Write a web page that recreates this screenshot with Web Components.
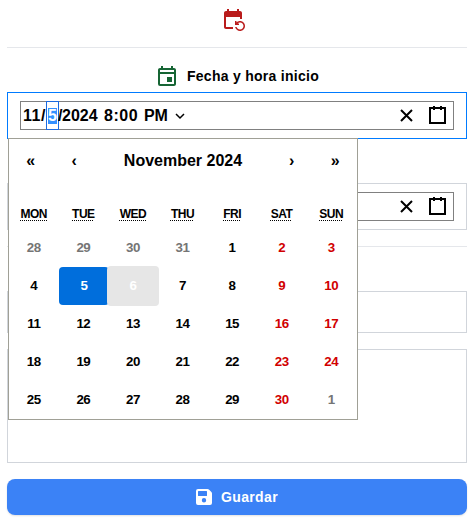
<!DOCTYPE html>
<html lang="es">
<head>
<meta charset="utf-8">
<title>Fecha y hora</title>
<style>
body { margin: 0; background: #fff; color: #000; font-family: "Liberation Sans", Arial, sans-serif; }
</style>
</head>
<body>
<event-form></event-form>
<script>
class UiIcon extends HTMLElement {
  connectedCallback() {
    const shapes = {
      repeat: ['0 0 24 24', '<path fill="currentColor" d="M21 12V6c0-1.1-.9-2-2-2h-1V2h-2v2H8V2H6v2H5c-1.1 0-1.99.9-1.99 2L3 20c0 1.1.89 2 2 2h7v-2H5V10h14v2h2zm-5.36 8c.43 1.45 1.77 2.5 3.36 2.5 1.93 0 3.5-1.57 3.5-3.5s-1.57-3.5-3.5-3.5c-.95 0-1.82.38-2.45 1H18V18h-4v-4h1.5v1.43c.9-.88 2.14-1.43 3.5-1.43 2.76 0 5 2.24 5 5s-2.24 5-5 5c-2.42 0-4.44-1.72-4.9-4h1.54z"/>'],
      event: ['0 0 24 24', '<path fill="currentColor" d="M19 4h-1V2h-2v2H8V2H6v2H5c-1.11 0-1.99.9-1.99 2L3 20a2 2 0 0 0 2 2h14c1.1 0 2-.9 2-2V6c0-1.1-.9-2-2-2zm0 16H5V10h14v10zm0-12H5V6h14v2zM12 13h5v5h-5z"/>'],
      save: ['0 0 16 16', '<path fill="currentColor" fill-rule="evenodd" d="M2 0h9.5a2 2 0 0 1 1.4.6l2.5 2.5a2 2 0 0 1 .6 1.4V14a2 2 0 0 1-2 2H2a2 2 0 0 1-2-2V2a2 2 0 0 1 2-2zM2.6 2a.6.6 0 0 0-.6.6v3.8a.6.6 0 0 0 .6.6h7.8a.6.6 0 0 0 .6-.6V2.6a.6.6 0 0 0-.6-.6zM8 9a2.2 2.2 0 1 0 0 4.4A2.2 2.2 0 0 0 8 9z"/>'],
      clear: ['0 0 19 19', '<path fill="none" stroke="currentColor" stroke-width="2" d="M4 4l11 11M15 4L4 15"/>'],
      calendar: ['0 0 19 19', '<g fill="none" stroke="currentColor" stroke-width="2"><rect x="2" y="2" width="15" height="15"/><path d="M6 0v4M13 0v4"/></g>'],
      chevron: ['0 0 10 10', '<path fill="none" stroke="currentColor" stroke-width="1.5" d="M1 3l4 4 4-4"/>']
    };
    const [box, art] = shapes[this.getAttribute('name')];
    this.attachShadow({ mode: 'open' }).innerHTML = `<style>
      :host { display: block; flex: none; width: var(--size, 24px); height: var(--size, 24px); }
      svg { display: block; width: 100%; height: 100%; }
    </style><svg viewBox="${box}">${art}</svg>`;
  }
}
customElements.define('ui-icon', UiIcon);

class DateField extends HTMLElement {
  connectedCallback() {
    this.attachShadow({ mode: 'open' }).innerHTML = `<style>
      :host { display: block; box-sizing: border-box; height: 47px; padding: 8px 12px; border: 1px solid #d1d5db; }
      :host([active]) { border-color: #007bff; }
      .wrap { box-sizing: border-box; height: 29px; border: 1px solid gray; display: flex; align-items: center; --size: 19px; gap: 12px; padding-right: 6px; }
      .value { flex: 1; align-self: stretch; display: flex; align-items: center; }
    </style><div class="wrap"><div class="value"><slot></slot></div><ui-icon name="clear"></ui-icon><ui-icon name="calendar"></ui-icon></div>`;
  }
}
customElements.define('date-field', DateField);

class DateValue extends HTMLElement {
  connectedCallback() {
    this.attachShadow({ mode: 'open' }).innerHTML = `<style>
      :host { display: flex; align-items: center; height: 27px; padding-left: 2px; font: bold 16px/18px "Liberation Sans", Arial, sans-serif; white-space: pre; }
      .month { width: 18px; letter-spacing: .4px; }
      .slash { width: 4px; }
      .day { box-sizing: border-box; width: 13px; height: 29px; margin: -1px 0 -1px 1px; border: 1px solid #1b6ae0; display: flex; align-items: center; justify-content: center; }
      .day span { background: #3390ff; color: #fff; width: 9px; height: 16px; line-height: 16px; }
      .day + .slash { margin-left: -1px; }
      .year { width: 42px; }
      .time { width: 40px; letter-spacing: .5px; }
      .half { width: 31px; letter-spacing: -.2px; }
      ui-icon { --size: 10px; }
    </style><span class="month">11</span><span class="slash">/</span><span class="day"><span>5</span></span><span class="slash">/</span><span class="year">2024</span><span class="time">8:00</span><span class="half">PM</span><ui-icon name="chevron"></ui-icon>`;
  }
}
customElements.define('date-value', DateValue);

class MonthCalendar extends HTMLElement {
  connectedCallback() {
    const names = ['MON', 'TUE', 'WED', 'THU', 'FRI', 'SAT', 'SUN'];
    let tiles = '';
    for (let i = 0; i < 35; i++) {
      const offset = i - 3;
      const outside = offset < 1 || offset > 30;
      const day = offset < 1 ? 31 + offset : offset > 30 ? offset - 30 : offset;
      const cls = outside ? 'outside' : day === 5 ? 'selected' : day === 6 ? 'disabled' : i % 7 > 4 ? 'weekend' : '';
      tiles += `<span class="${cls}">${day}</span>`;
    }
    this.attachShadow({ mode: 'open' }).innerHTML = `<style>
      :host { display: block; box-sizing: border-box; width: 350px; height: 282px; background: #fff; border: 1px solid #a0a096; font-weight: bold; }
      nav { display: flex; height: 44px; align-items: center; font-size: 16px; text-align: center; }
      nav span { width: 43.5px; }
      nav b { flex: 1; }
      .week, .days { display: grid; grid-template-columns: repeat(7, 1fr); text-align: center; margin-right: 1px; }
      .week { margin-top: 17px; height: 29px; line-height: 29px; font-size: 12px; letter-spacing: -.5px; }
      abbr { text-decoration: underline dotted 1px; text-underline-offset: 2px; }
      .days { grid-auto-rows: 38px; line-height: 38px; font-size: 13.333px; letter-spacing: -.5px; }
      .outside { color: #757575; }
      .weekend { color: #d10000; }
      .selected { background: #006edc; color: #fff; border-radius: 4px; margin-right: -1px; }
      .disabled { background: #e6e6e6; color: #fff; border-radius: 4px; margin: -1px; line-height: 40px; }
    </style>
    <nav><span>«</span><span>‹</span><b>November 2024</b><span>›</span><span>»</span></nav>
    <div class="week">${names.map(n => `<span><abbr>${n}</abbr></span>`).join('')}</div>
    <div class="days">${tiles}</div>`;
  }
}
customElements.define('month-calendar', MonthCalendar);

class SaveButton extends HTMLElement {
  connectedCallback() {
    this.attachShadow({ mode: 'open' }).innerHTML = `<style>
      :host { display: flex; height: 36px; align-items: center; justify-content: center; gap: 9px; background: #3b82f6; color: #fff; border-radius: 8px; box-shadow: 0 1px 2px rgba(0,0,0,.12); font: bold 14px/20px "Liberation Sans", Arial, sans-serif; letter-spacing: .35px; --size: 16px; }
    </style><ui-icon name="save"></ui-icon><slot></slot>`;
  }
}
customElements.define('save-button', SaveButton);

class EventForm extends HTMLElement {
  connectedCallback() {
    this.attachShadow({ mode: 'open' }).innerHTML = `<style>
      :host { display: flex; flex-direction: column; box-sizing: border-box; width: 469px; height: 525px; padding: 0 2px 0 7px; }
      header { height: 47px; box-sizing: border-box; padding-top: 7px; display: flex; justify-content: center; color: #b91c1c; padding-right: 8px; }
      .rule { height: 1px; background: #e5e7eb; }
      .label { display: flex; justify-content: center; align-items: center; height: 24px; margin: 16px 0 4px; gap: 8px; color: #166534; }
      .label b { color: #000; font-size: 14px; letter-spacing: .28px; }
      .picker { position: relative; }
      month-calendar { position: absolute; left: 1px; top: 46px; z-index: 1; }
      .end { margin: 44px 0 16px; }
      .box { box-sizing: border-box; border: 1px solid #d1d5db; }
      .line { height: 42px; margin: 44px 0 16px; }
      .area { height: 114px; margin-bottom: 16px; }
    </style>
    <header><ui-icon name="repeat"></ui-icon></header>
    <div class="rule"></div>
    <div class="label"><ui-icon name="event"></ui-icon><b>Fecha y hora inicio</b></div>
    <div class="picker"><date-field active><date-value></date-value></date-field><month-calendar></month-calendar></div>
    <date-field class="end"></date-field>
    <div class="rule"></div>
    <div class="box line"></div>
    <div class="box area"></div>
    <save-button>Guardar</save-button>`;
  }
}
customElements.define('event-form', EventForm);
</script>
</body>
</html>
